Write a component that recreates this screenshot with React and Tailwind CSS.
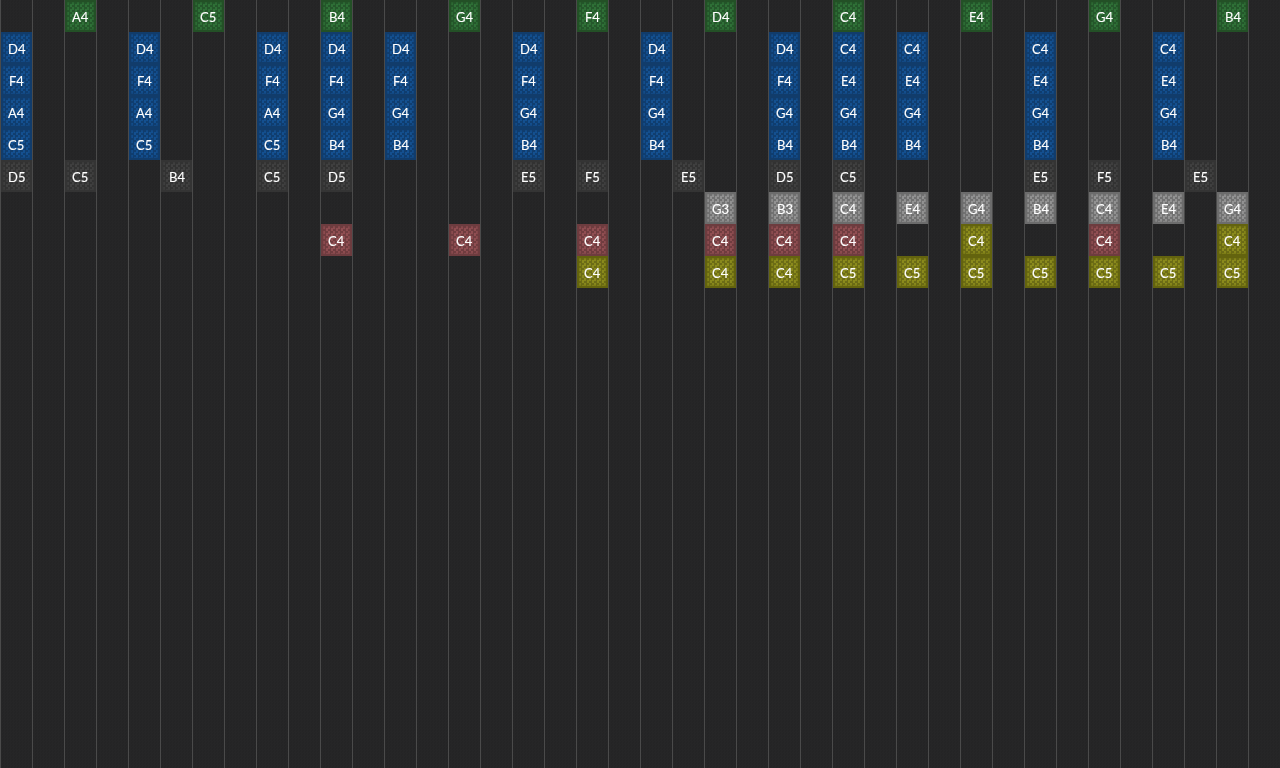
const COLORS = {
  g: "bg-[#2f7037] border-[#235026] shadow-[inset_0_0_3px_#235026]",
  b: "bg-[#145090] border-[#113c6b] shadow-[inset_0_0_3px_#113c6b]",
  k: "bg-[#404040] border-[#343434] shadow-[inset_0_0_3px_#343434]",
  w: "bg-[#929292] border-[#6c6c6c] shadow-[inset_0_0_3px_#6c6c6c]",
  r: "bg-[#904e52] border-[#6d3c3f] shadow-[inset_0_0_3px_#6d3c3f]",
  y: "bg-[#8a8a1c] border-[#63630e] shadow-[inset_0_0_3px_#63630e]",
};
const ROWS = [
  ["g", { 2: "A4", 6: "C5", 10: "B4", 14: "G4", 18: "F4", 22: "D4", 26: "C4", 30: "E4", 34: "G4", 38: "B4" }],
  ["b", { 0: "D4", 4: "D4", 8: "D4", 10: "D4", 12: "D4", 16: "D4", 20: "D4", 24: "D4", 26: "C4", 28: "C4", 32: "C4", 36: "C4" }],
  ["b", { 0: "F4", 4: "F4", 8: "F4", 10: "F4", 12: "F4", 16: "F4", 20: "F4", 24: "F4", 26: "E4", 28: "E4", 32: "E4", 36: "E4" }],
  ["b", { 0: "A4", 4: "A4", 8: "A4", 10: "G4", 12: "G4", 16: "G4", 20: "G4", 24: "G4", 26: "G4", 28: "G4", 32: "G4", 36: "G4" }],
  ["b", { 0: "C5", 4: "C5", 8: "C5", 10: "B4", 12: "B4", 16: "B4", 20: "B4", 24: "B4", 26: "B4", 28: "B4", 32: "B4", 36: "B4" }],
  ["k", { 0: "D5", 2: "C5", 5: "B4", 8: "C5", 10: "D5", 16: "E5", 18: "F5", 21: "E5", 24: "D5", 26: "C5", 32: "E5", 34: "F5", 37: "E5" }],
  ["w", { 22: "G3", 24: "B3", 26: "C4", 28: "E4", 30: "G4", 32: "B4", 34: "C4", 36: "E4", 38: "G4" }],
  ["r", { 10: "C4", 14: "C4", 18: "C4", 22: "C4", 24: "C4", 26: "C4", 34: "C4" }],
  ["y", { 18: "C4", 22: "C4", 24: "C4", 26: "C5", 28: "C5", 30: "C5", 32: "C5", 34: "C5", 36: "C5", 38: "C5" }],
];
const OVERRIDES = { "7-30": "y", "7-38": "y" };

function Note({ color, label }) {
  return (
    <div
      className={`w-full h-full border-2 flex items-center justify-center text-[13px] leading-none text-white bg-[repeating-conic-gradient(rgba(0,0,0,0.22)_0_25%,transparent_0_50%)] bg-[length:5px_5px] ${COLORS[color]}`}
    >
      <span className="will-change-transform translate-y-px [-webkit-text-stroke:0.1px_white]">{label}</span>
    </div>
  );
}

export default function App() {
  return (
    <div className="w-[1280px] h-[768px] overflow-hidden bg-[#252526] bg-[repeating-conic-gradient(#262627_0_25%,#242425_0_50%)] bg-[length:3px_3px] flex font-['Lato','Open_Sans',sans-serif]">
      {Array.from({ length: 40 }, (_, c) => (
        <div key={c} className="w-8 h-full shrink-0 border-l border-[#4a4a4a] flex flex-col">
          {ROWS.map(([color, notes], r) => {
            const over = OVERRIDES[`${r}-${c}`];
            const label = over ? "C4" : notes[c];
            return (
              <div key={r} className="h-8 shrink-0">
                {label ? <Note color={over || color} label={label} /> : null}
              </div>
            );
          })}
        </div>
      ))}
    </div>
  );
}
